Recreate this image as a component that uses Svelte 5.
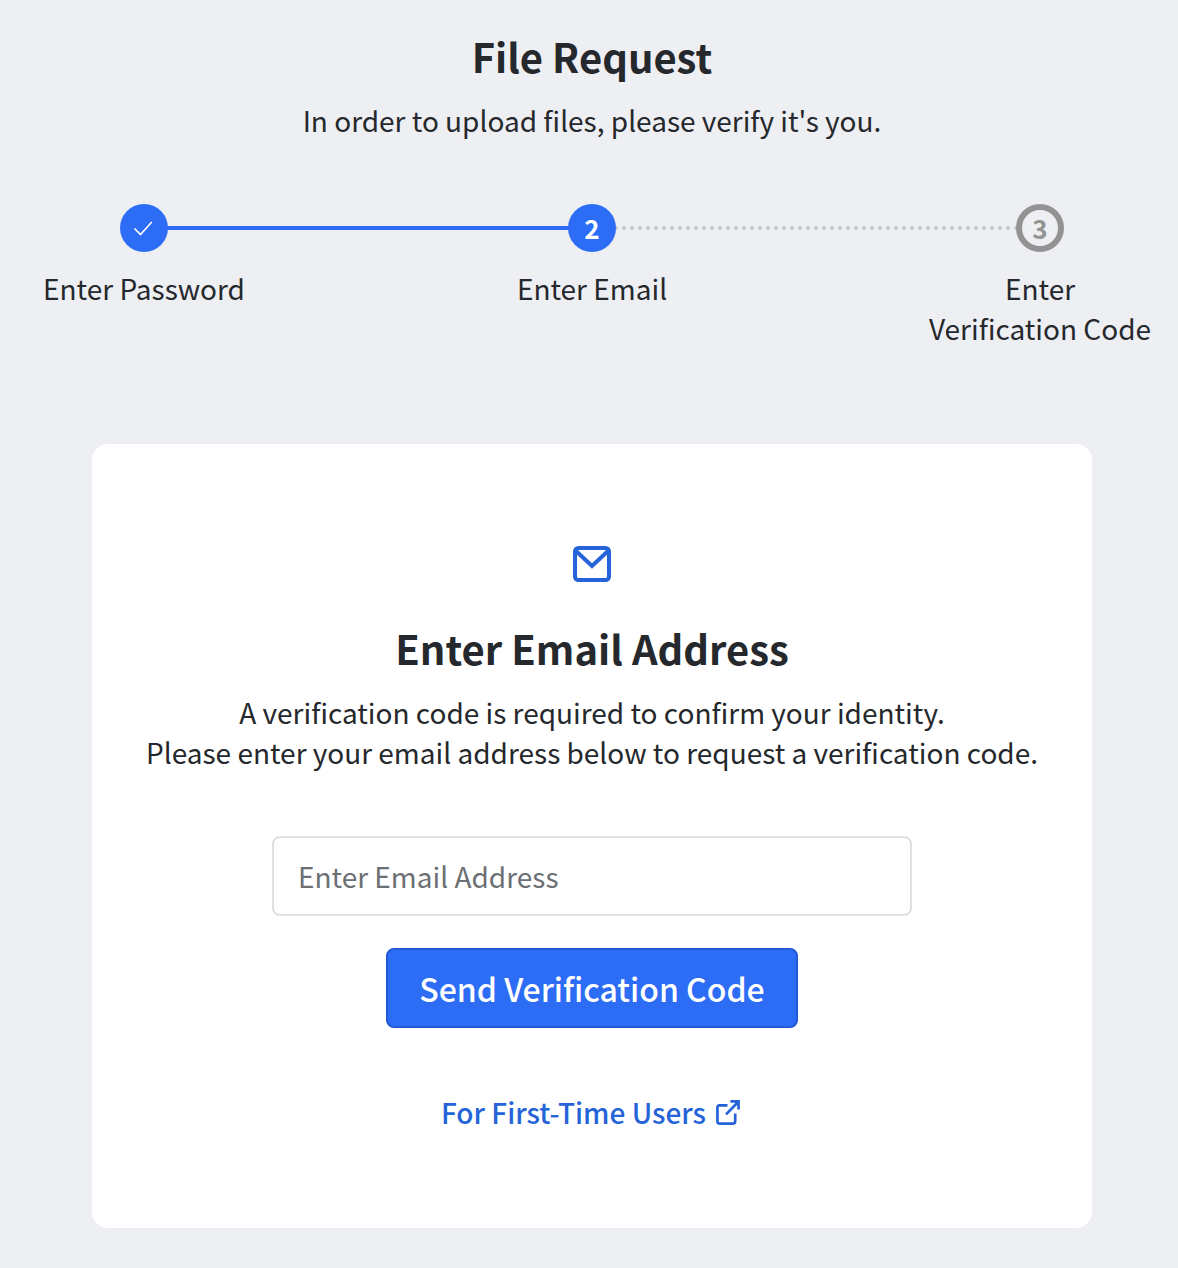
<script>
  const steps = [
    { label: ['Enter Password'], state: 'done' },
    { label: ['Enter Email'], state: 'active', n: 2 },
    { label: ['Enter', 'Verification Code'], state: 'todo', n: 3 }
  ];
</script>

<div class="page">
  <header>
    <h1>File Request</h1>
    <p>In order to upload files, please verify it's you.</p>
  </header>

  <ol class="stepper">
    {#each steps as s, i}
      <li class="step {s.state}">
        <div class="track">
          {#if i > 0}<span class="line {s.state === 'todo' ? 'dotted' : 'solid'} left"></span>{/if}
          {#if i < steps.length - 1}<span class="line {steps[i + 1].state === 'todo' ? 'dotted' : 'solid'} right"></span>{/if}
          <span class="dot">
            {#if s.state === 'done'}
              <svg class="check" width="24" height="24" viewBox="0 0 24 24" fill="none"><path d="M2.500 12.500l6 6L19.800 6" stroke="#fff" stroke-width="1.600" /></svg>
            {:else}
              <span class="num">{s.n}</span>
            {/if}
          </span>
        </div>
        <div class="label">
          {#each s.label as l}<div>{l}</div>{/each}
        </div>
      </li>
    {/each}
  </ol>

  <main class="card">
    <svg class="mail" width="38" height="36" viewBox="0 0 38 36" fill="none">
      <rect x="2" y="2" width="34" height="32" rx="3.500" stroke="#2563d9" stroke-width="4" />
      <path d="M3 5l16 15L35 5" stroke="#2563d9" stroke-width="4" />
    </svg>
    <h2>Enter Email Address</h2>
    <p class="desc">A verification code is required to confirm your identity.<br />Please enter your email address below to request a verification code.</p>
    <input type="text" placeholder="Enter Email Address" />
    <button>Send Verification Code</button>
    <a href="#top">
      For First-Time Users
      <svg class="ext" width="24" height="25" viewBox="0 0 25 26" fill="none" stroke="#2563d9" stroke-width="2.800">
        <path d="M12 5.500H3.500a2 2 0 0 0-2 2v15a2 2 0 0 0 2 2H18a2 2 0 0 0 2-2V14" />
        <path d="M15 1.500h8.500V10M23.500 1.500L10.500 15" />
      </svg>
    </a>
  </main>
</div>

<style>
  :global(body) { background: #eeeff3; }
  .page {
    font-family: "Noto Sans CJK JP", "Noto Sans", sans-serif;
    color: #25282c;
    background: #eeeff3;
    height: 1268px;
    overflow: hidden;
    padding: 28px 0 0 6px;
    box-sizing: border-box;
  }
  header { text-align: center; }
  h1 { margin: 0; font-size: 40px; line-height: 56px; font-weight: 700; }
  header p { margin: 16px 0 0; font-size: 28px; line-height: 40px; }
  .stepper {
    list-style: none;
    margin: 64px 0 0;
    padding: 0;
    display: grid;
    grid-template-columns: repeat(3, 448px);
    justify-content: center;
  }
  .track { position: relative; height: 48px; display: flex; justify-content: center; }
  .dot {
    position: relative;
    width: 48px;
    height: 48px;
    box-sizing: border-box;
    border-radius: 50%;
    background: #2d6df6;
    color: #fff;
    font-size: 26px;
    font-weight: 700;
    display: flex;
    align-items: center;
    justify-content: center;
  }
  .num { margin-top: -2px; }
  .todo .dot { background: #eeeff3; border: 6px solid #939393; color: #939393; }
  .line { position: absolute; top: 22px; height: 4px; }
  .line.left { left: 0; right: 50%; }
  .line.right { left: 50%; right: 0; }
  .solid { background: #2d6df6; }
  .dotted {
    background: radial-gradient(circle at 2px 2px, #c6c7ca 1.700px, transparent 2.200px) -2px 0 / 8px 4px repeat-x;
  }
  .label { text-align: center; font-size: 28px; line-height: 40px; margin-top: 16px; }
  .card {
    width: 1000px;
    height: 784px;
    box-sizing: border-box;
    margin: 96px auto 0;
    background: #fff;
    border-radius: 16px;
    padding-top: 102px;
    display: flex;
    flex-direction: column;
    align-items: center;
  }
  h2 { margin: 36px 0 0; font-size: 40px; line-height: 60px; font-weight: 700; }
  .desc { margin: 14px 0 0; font-size: 28px; line-height: 40px; text-align: center; }
  input {
    margin-top: 64px;
    width: 640px;
    height: 80px;
    box-sizing: border-box;
    border: 2px solid #dfe0e2;
    border-radius: 8px;
    padding: 0 24px;
    font: inherit;
    font-size: 28px;
    color: #212529;
    background: #fff;
  }
  input::placeholder { color: #6c6f73; opacity: 1; }
  button {
    margin-top: 32px;
    width: 412px;
    height: 80px;
    border: 2px solid #2159d6;
    border-radius: 8px;
    background: #2d6df6;
    color: #fff;
    font: inherit;
    font-size: 32px;
    font-weight: 500;
  }
  a {
    margin-top: 64px;
    display: flex;
    align-items: center;
    gap: 10px;
    color: #2563d9;
    font-size: 28px;
    line-height: 40px;
    font-weight: 500;
    text-decoration: none;
  }
  .ext { margin-right: 3px; }
</style>
